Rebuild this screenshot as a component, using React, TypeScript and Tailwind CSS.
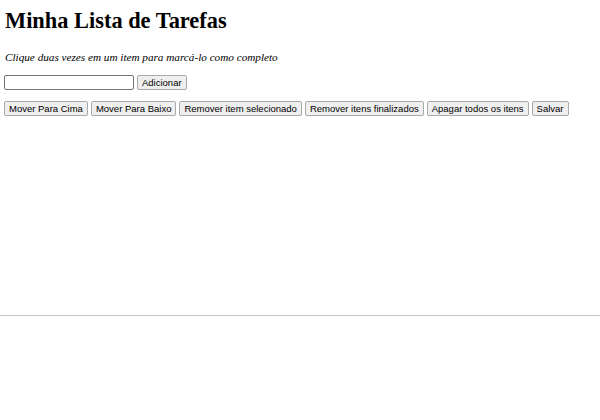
const buttons = [
  "Mover Para Cima",
  "Mover Para Baixo",
  "Remover item selecionado",
  "Remover itens finalizados",
  "Apagar todos os itens",
  "Salvar",
];

const btn =
  "shrink-0 whitespace-nowrap h-[15px] px-[4px] border border-[#a9a9a9] rounded-[2px] bg-[#efefef] text-[9.5px] leading-none text-black font-['Liberation_Sans',Arial,sans-serif]";

const App = () => {
  return (
    <div className="w-[600px] h-[420px] bg-white text-black font-['Liberation_Serif','Times_New_Roman',serif] overflow-hidden">
      <div className="h-[315px] px-[4px] pt-[8px]">
        <h1 className="text-[22.4px] leading-[26px] font-bold pl-px">Minha Lista de Tarefas</h1>
        <p className="mt-[17px] text-[11.2px] leading-[13px] italic pl-px">
          Clique duas vezes em um item para marcá-lo como completo
        </p>
        <div className="mt-[11px] flex items-center gap-[3px]">
          <input
            type="text"
            className="w-[130px] h-[15px] border border-[#767676] rounded-[2px] bg-white"
          />
          <button className={btn}>Adicionar</button>
        </div>
        <div className="mt-[11px] flex items-center gap-[3px]">
          {buttons.map((b) => (
            <button key={b} className={btn}>
              {b}
            </button>
          ))}
        </div>
      </div>
      <hr className="border-0 border-t border-[#c4c4c4]" />
    </div>
  );
};

export default App;
